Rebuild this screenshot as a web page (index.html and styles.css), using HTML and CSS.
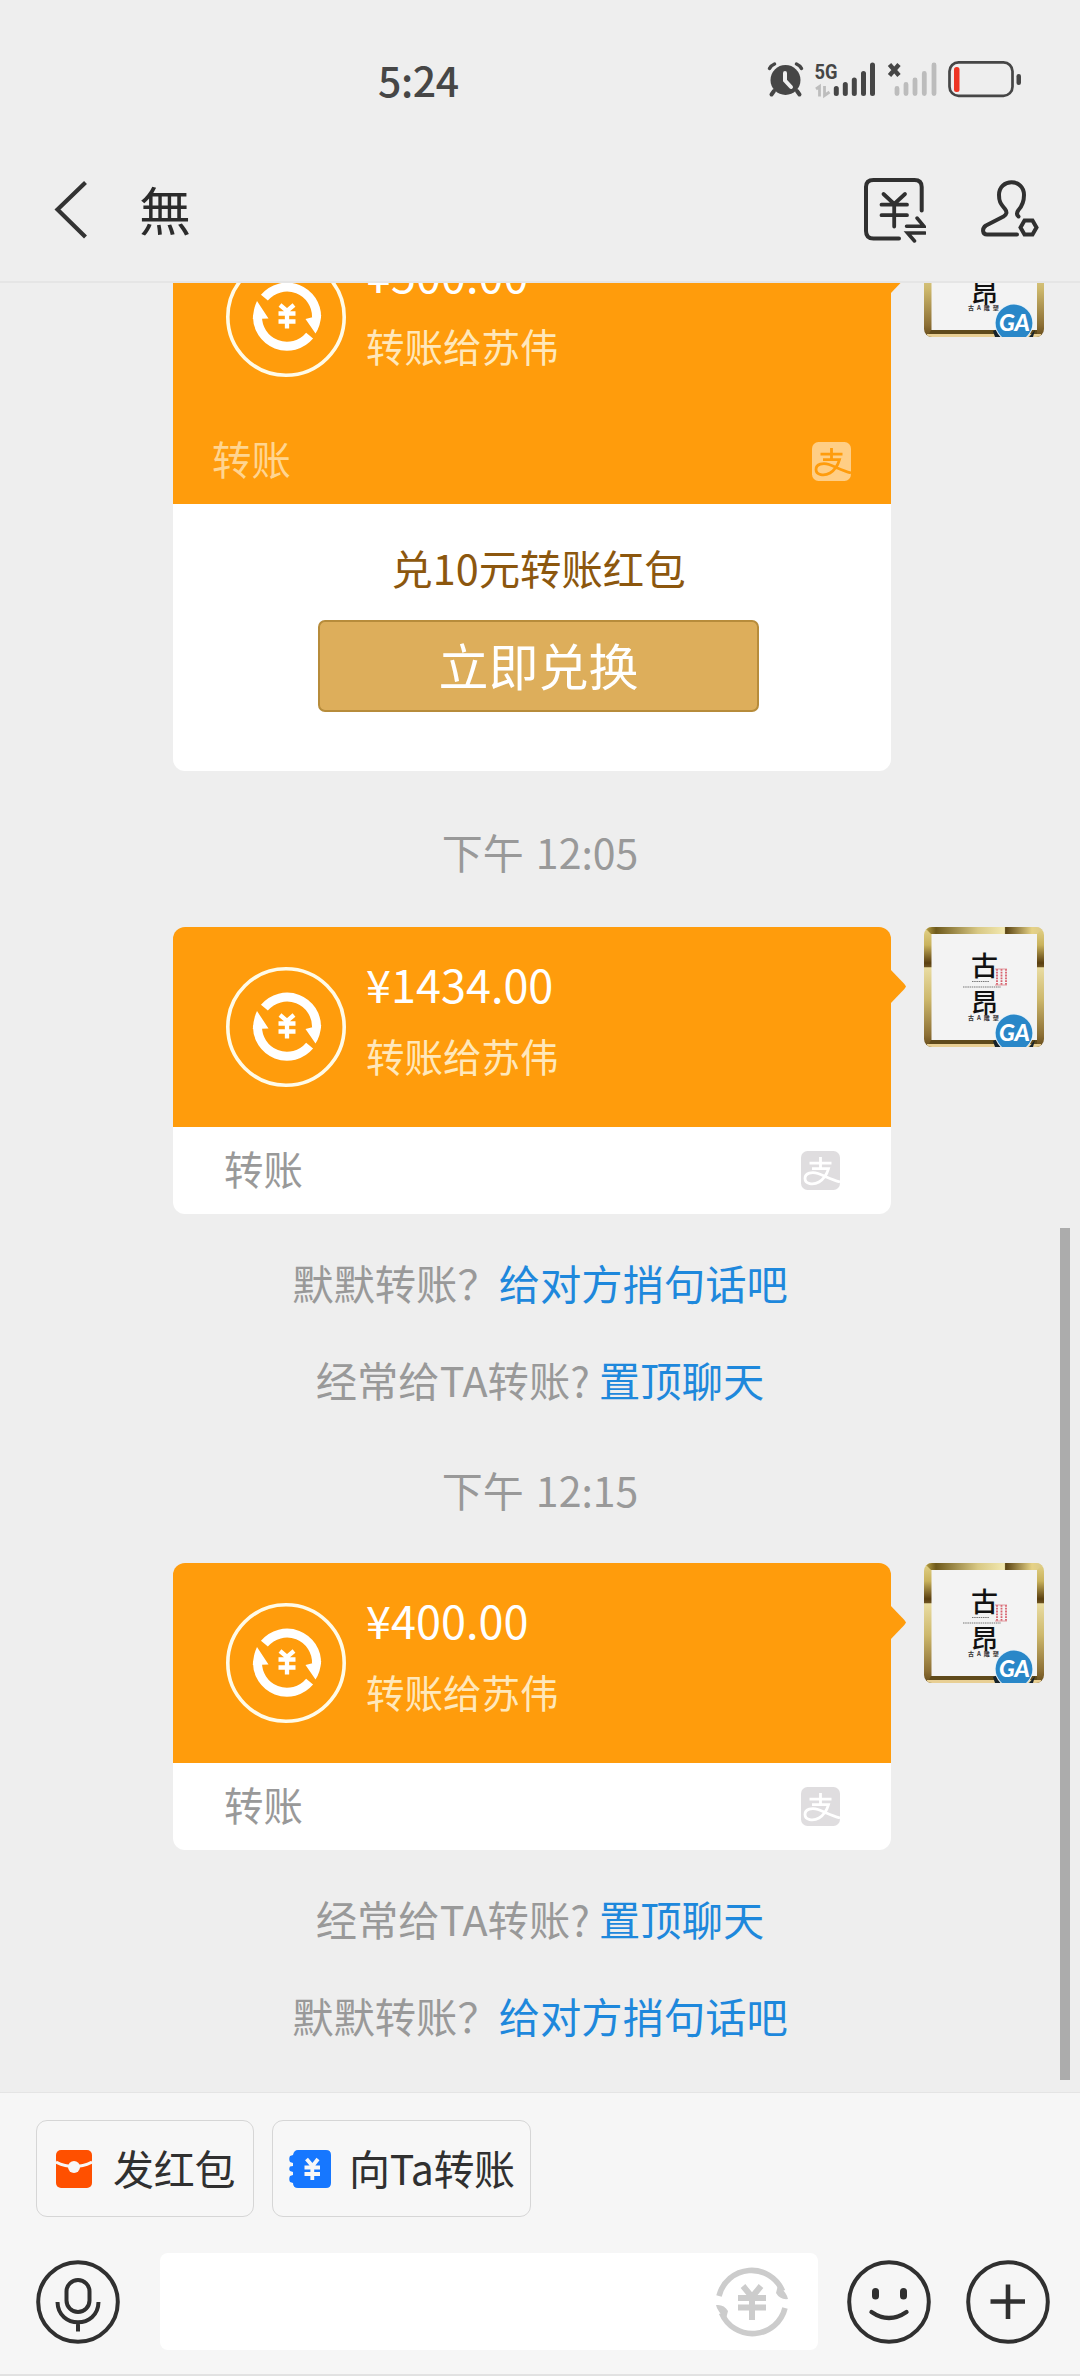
FILE: index.html
```html
<!DOCTYPE html>
<html lang="zh-CN">
<head>
<meta charset="utf-8">
<title>無</title>
<link rel="stylesheet" href="styles.css">
</head>
<body>
<svg class="defs" width="0" height="0" aria-hidden="true">
  <defs>
    <linearGradient id="goldTop" x1="0" x2="1" y1="0" y2="0">
      <stop offset="0" stop-color="#c3ab4c"/><stop offset=".1" stop-color="#6f5a1c"/><stop offset=".45" stop-color="#d8c884"/>
      <stop offset=".67" stop-color="#f2e8b0"/><stop offset=".68" stop-color="#5a4312"/><stop offset=".9" stop-color="#e6d286"/><stop offset="1" stop-color="#d9c88c"/>
    </linearGradient>
    <linearGradient id="goldSide" x1="0" x2="0" y1="0" y2="1">
      <stop offset="0" stop-color="#e4d389"/><stop offset=".15" stop-color="#c9b25c"/><stop offset=".3" stop-color="#5a3f10"/><stop offset=".33" stop-color="#6b5120"/>
      <stop offset=".34" stop-color="#e9dca2"/><stop offset=".6" stop-color="#cdb86c"/><stop offset=".9" stop-color="#8c6f35"/><stop offset="1" stop-color="#664c1c"/>
    </linearGradient>
    <clipPath id="avatarClip"><rect width="120" height="120" rx="8"/></clipPath>
    <symbol id="avatar" viewBox="0 0 120 120">
      <g clip-path="url(#avatarClip)">
        <rect width="120" height="120" fill="url(#goldSide)"/>
        <path d="M0 0H120L113 7H7Z" fill="url(#goldTop)"/>
        <path d="M3 117H117V120H3Z" fill="#e8cf94"/>
        <path d="M7 113H113V117H5Z" fill="#5f4a1b"/>
        <rect x="7.500" y="7" width="105.500" height="106" fill="#f3f3f3"/>
        <text class="av-name" x="60.500" y="49" text-anchor="middle">古</text>
        <text class="av-name" x="60.500" y="86" text-anchor="middle">昂</text>
        <path d="M48 54.500H65M39 60H77" stroke="#777" stroke-width="1.200" stroke-dasharray="1.500 .7"/>
        <path d="M73 42V58M77.500 42V58M82 42V58" stroke="#d8606c" stroke-width="1.800" stroke-dasharray="1.800 1"/>
        <path d="M71 42H83M71 58H83" stroke="#dc8088" stroke-width=".8"/>
        <text class="av-small" x="44" y="92.500">古 A 雕 塑</text>
        <path d="M69 114L74 112L77 120H71ZM111 113L105 120H109Z" fill="#16222a"/>
        <circle cx="90" cy="106" r="19.300" fill="#e6f1f8"/>
        <circle cx="90" cy="106" r="18.400" fill="#2987c8"/>
        <text class="av-ga" x="75" y="114" textLength="31" lengthAdjust="spacingAndGlyphs">GA</text>
      </g>
    </symbol>
    <symbol id="transfer" viewBox="0 0 120 120">
      <circle cx="60" cy="60" r="58.200" fill="none" stroke="#fffbe8" stroke-width="3.600"/>
      <g fill="none" stroke="#fff" stroke-width="9">
        <path d="M38.400 40.700A29.500 29.500 0 0 1 90.500 61"/>
        <path d="M83.600 78.700A29.500 29.500 0 0 1 31.500 58.500"/>
      </g>
      <path d="M79.500 62L95.200 58Q94.500 69 89.500 76.500Z M42.500 61.500L26.800 62Q27.500 51 31 44Z" fill="#fff"/>
      <path d="M54 48L61 54L68 48M61 54V71.500M52.500 56.500H69.500M52.500 64.500H69.500" fill="none" stroke="#fff" stroke-width="4.300"/>
    </symbol>
    <symbol id="alipay" viewBox="0 0 39 39">
      <rect class="ali-bg" width="39" height="39" rx="6.500"/>
      <path class="ali-fg" d="M8.500 12.200H30.500M19.500 6V17M11 17.700H27.500C26 23 23 28 18 31C12 34.500 4 33 4 27.500C4 22 11 20.500 17 22.500C24 25 30 28.500 39 31" />
    </symbol>
  </defs>
</svg>

<main class="screen">
  <header class="top">
    <div class="status">
      <span class="clock">5:24</span>
      <svg class="status-icons" viewBox="765 58 260 44" width="260" height="44">
        <g fill="#464646" stroke="#464646" stroke-linecap="round">
          <circle cx="785.500" cy="80" r="15" stroke="none"/>
          <path d="M774 91L771.500 94.500M797 91L799.500 94.500" stroke-width="4"/>
          <path d="M769.500 68.500Q771 65.500 774.500 64M801.500 68.500Q800 65.500 796.500 64" fill="none" stroke-width="3.500"/>
        </g>
        <path d="M785 73V80.500L791 87" fill="none" stroke="#eee" stroke-width="4" stroke-linecap="round"/>
        <text class="net" x="814.500" y="78.500" textLength="23" lengthAdjust="spacingAndGlyphs">5G</text>
        <path d="M816 89L819.500 86.500V96.500M829.500 92L824.500 95.500V86" fill="none" stroke="#bdbdbd" stroke-width="2.800"/>
        <g stroke="#464646" stroke-width="5" stroke-linecap="round">
          <path d="M836.300 88.500V93.500M845.300 84.500V93.500M854.300 80V93.500M863.500 73.500V93.500M872.500 65V93.500"/>
        </g>
        <path d="M897 88.500V93.500M906 84.500V93.500M915 80V93.500M924.300 73.500V93.500M934 65V93.500" stroke="#bcbcbc" stroke-width="4.800" stroke-linecap="round"/>
        <path d="M889.500 64.500L899 75.500M899 64.500L889.500 75.500" stroke="#464646" stroke-width="4.400"/>
        <rect x="949.500" y="62.300" width="63" height="33.500" rx="9" fill="none" stroke="#464646" stroke-width="2.700"/>
        <rect x="954" y="67" width="5.500" height="25" rx="2.500" fill="#ee3524"/>
        <rect x="1016.500" y="74" width="4.500" height="11" rx="2.200" fill="#464646"/>
      </svg>
    </div>
    <div class="nav">
      <svg class="back" viewBox="0 0 40 60" width="40" height="60"><path d="M35.500 2.500L7.500 29.500L35.500 57" fill="none" stroke="#333" stroke-width="4.200"/></svg>
      <h1 class="title">無</h1>
      <svg class="nav-icon" viewBox="862 176 64 68" width="64" height="68">
        <g fill="none" stroke="#303030" stroke-width="4" stroke-linecap="round" stroke-linejoin="round">
          <path d="M921.700 210.500V187Q921.700 180 914.500 180H873.500Q866 180 866 187V231Q866 238.500 873.500 238.500H899"/>
          <path d="M883.500 194L894.200 204L905 194M894.200 204V226.500M881.500 204.700H907M881.500 215.200H907" stroke-width="3.800"/>
          <path d="M906.500 226.300H924L917 218M925 233H907.500L914.500 241" stroke-width="3.500" stroke-linejoin="miter"/>
        </g>
      </svg>
      <svg class="nav-icon" viewBox="978 178 64 64" width="64" height="64">
        <g fill="none" stroke="#303030" stroke-width="4" stroke-linecap="round" stroke-linejoin="round">
          <path d="M1017 234.500H987C982.500 234.500 981.500 228.500 986 225.500L1003.500 216.500Q1008.500 213.500 1005 209C1000 203 999 201 999 195C999 178 1024 178 1024 195C1024 201 1023 205 1018.500 210Q1015.500 214 1018.500 216.500"/>
          <path d="M1024.500 220.500H1032.500L1036.500 227.500L1032.500 234.500H1024.500L1020.500 227.500Z" stroke-linejoin="miter"/>
        </g>
      </svg>
    </div>
  </header>

  <section class="chat">
    <article class="message">
      <div class="card">
        <div class="card-body card-tall">
          <div class="pay">
            <svg class="pay-icon"><use href="#transfer"/></svg>
            <div class="pay-text"><div class="amount">¥500.00</div><div class="to">转账给苏伟</div></div>
          </div>
          <div class="card-foot-in"><span>转账</span><svg class="ali ali-orange"><use href="#alipay"/></svg></div>
        </div>
        <div class="promo">
          <div class="promo-title">兑10元转账红包</div>
          <button class="promo-btn">立即兑换</button>
        </div>
      </div>
      <svg class="avatar"><use href="#avatar"/></svg>
    </article>

    <time class="stamp">下午 12:05</time>

    <article class="message">
      <div class="card">
        <div class="card-body">
          <div class="pay">
            <svg class="pay-icon"><use href="#transfer"/></svg>
            <div class="pay-text"><div class="amount">¥1434.00</div><div class="to">转账给苏伟</div></div>
          </div>
        </div>
        <div class="card-foot"><span>转账</span><svg class="ali ali-gray"><use href="#alipay"/></svg></div>
      </div>
      <svg class="avatar"><use href="#avatar"/></svg>
    </article>
    <div class="hints">
      <p class="hint">默默转账？<a>给对方捎句话吧</a></p>
      <p class="hint">经常给TA转账? <a>置顶聊天</a></p>
    </div>

    <time class="stamp stamp-late">下午 12:15</time>

    <article class="message">
      <div class="card">
        <div class="card-body">
          <div class="pay">
            <svg class="pay-icon"><use href="#transfer"/></svg>
            <div class="pay-text"><div class="amount">¥400.00</div><div class="to">转账给苏伟</div></div>
          </div>
        </div>
        <div class="card-foot"><span>转账</span><svg class="ali ali-gray"><use href="#alipay"/></svg></div>
      </div>
      <svg class="avatar"><use href="#avatar"/></svg>
    </article>
    <div class="hints">
      <p class="hint">经常给TA转账? <a>置顶聊天</a></p>
      <p class="hint">默默转账？<a>给对方捎句话吧</a></p>
    </div>
    <div class="scrollbar"></div>
  </section>

  <footer class="composer">
    <div class="quick">
      <button class="chip chip-red">
        <svg viewBox="0 0 36 38" width="36" height="38">
          <rect width="36" height="38" rx="5" fill="#ff5000"/>
          <path d="M0 12Q18 21 36 12" fill="none" stroke="#f7f7f7" stroke-width="3"/>
          <circle cx="18" cy="17" r="6" fill="#f7f7f7"/>
        </svg>
        <span>发红包</span>
      </button>
      <button class="chip chip-blue">
        <svg viewBox="0 0 42 38" width="42" height="38">
          <path d="M9 0H37Q42 0 42 5V33Q42 38 37 38H9Q4 38 4 33L1 32Q-.5 29 1 26L4 25V22L1 21Q-.5 19 1 16.500L4 16V13L1 12Q-.5 9 1 6L4 5Q5 0 9 0Z" fill="#1677ff"/>
          <path d="M17.500 9L23.500 16L29 9M23.300 16V30M15.500 17.500H31M15.500 24H31" fill="none" stroke="#f7f7f7" stroke-width="3.800"/>
        </svg>
        <span>向Ta转账</span>
      </button>
    </div>
    <div class="input-row">
      <svg class="round" viewBox="0 0 84 84">
        <g fill="none" stroke="#303030" stroke-width="4">
          <circle cx="42" cy="42" r="39.800"/>
          <rect x="30.500" y="20" width="23" height="32" rx="11.500"/>
          <path d="M21.500 42C22 69 62 69 62.500 42M42 62V71.500"/>
        </g>
      </svg>
      <div class="field">
        <svg viewBox="0 0 74 74" width="74" height="74">
          <g fill="none" stroke="#ccc" stroke-width="5.600">
            <path d="M4 31A33.500 33.500 0 0 1 67.500 26M70 43A33.500 33.500 0 0 1 6.500 48"/>
            <path d="M28 21L37 32L46 21M37 32V55M23 33H51M23 42.500H51" stroke-width="6"/>
          </g>
          <path d="M63 20Q72 28 73 34Q65 35 61 28ZM11 54Q2 46 1 40Q9 39 13 46Z" fill="#ccc"/>
        </svg>
      </div>
      <svg class="round round-face" viewBox="0 0 84 84">
        <circle cx="42" cy="42" r="39.800" fill="none" stroke="#303030" stroke-width="4"/>
        <rect x="25" y="28" width="7" height="11.500" rx="3.500" fill="#303030"/><rect x="53" y="28" width="7" height="11.500" rx="3.500" fill="#303030"/>
        <path d="M24.500 52Q42 64 59.500 52" fill="none" stroke="#303030" stroke-width="4.300" stroke-linecap="round"/>
      </svg>
      <svg class="round round-plus" viewBox="0 0 84 84">
        <circle cx="42" cy="42" r="39.800" fill="none" stroke="#303030" stroke-width="4"/>
        <path d="M42 24.500V59M24.500 41.500H59" stroke="#303030" stroke-width="4.600"/>
      </svg>
    </div>
  </footer>
</main>
</body>
</html>
```
FILE: styles.css
```css
* { box-sizing: border-box; }
body {
  margin: 0;
  background: #eee;
  color: #333;
  font-family: "Noto Sans CJK SC", sans-serif;
}
svg { display: block; flex: none; }
button { font: inherit; color: inherit; margin: 0; padding: 0; }
p, h1 { margin: 0; }
.defs { position: absolute; }

.screen { width: 1080px; height: 2376px; display: flex; flex-direction: column; overflow: hidden; }

/* status bar and title bar */
.top { height: 283px; flex: none; border-bottom: 2px solid #e5e5e5; }
.status { height: 160px; padding: 0 55px 0 378px; display: flex; align-items: center; justify-content: space-between; }
.clock { font-size: 41px; line-height: 60px; font-weight: 500; color: #464646; margin-top: -3px; letter-spacing: -.4px; }
.nav { height: 100px; display: flex; align-items: center; padding: 0 38px 0 50px; }
.title { flex: 1; margin-left: 49px; font-size: 52px; line-height: 80px; font-weight: 400; color: #2b2b2b; margin-top: -2px; }
.nav-icon + .nav-icon { margin-left: 52px; }

/* conversation */
.chat {
  position: relative;
  height: 1809px;
  flex: none;
  padding: 0 36px 45px 173px;
  overflow: hidden;
  display: flex;
  flex-direction: column;
  justify-content: flex-end;
}
.message { display: flex; flex: none; align-items: flex-start; gap: 33px; }
.card { position: relative; width: 718px; flex: none; }
.card::after {
  content: "";
  position: absolute;
  left: 717px;
  top: 42px;
  width: 16px;
  height: 35px;
  background: #ff9c0c;
  clip-path: polygon(0 0, 90% 43%, 100% 50%, 90% 57%, 0 100%);
}
.card-body { height: 200px; padding: 0 40px 0 53px; background: #ff9c0c; border-radius: 12px 12px 0 0; }
.card-tall { height: 287px; }
.pay { display: flex; padding-top: 40px; gap: 20px; }
.pay-icon { width: 120px; height: 120px; }
.amount { color: #fff; font-size: 45px; line-height: 50px; margin-top: -8px; }
.to { color: #ffe8bb; font-size: 38.500px; line-height: 50px; margin-top: 21px; }
.card-foot-in, .card-foot { display: flex; align-items: center; justify-content: space-between; font-size: 39.400px; line-height: 50px; }
.card-foot-in { margin: 59px 0 0 -14px; color: #ffd591; }
.card-foot { height: 87px; padding: 0 51px; background: #fff; border-radius: 0 0 12px 12px; color: #999; }
.card-foot-in span, .card-foot span { position: relative; top: -3px; }
.ali { width: 39px; height: 39px; }
.ali-gray { fill: #dfdddf; stroke: #fff; }
.ali-orange { fill: #ffce85; stroke: #ff9c0c; }
.ali-bg { stroke: none; }
.ali-fg { fill: none; stroke-width: 2.800px; }
.promo {
  height: 267px;
  padding-top: 31px;
  display: flex;
  flex-direction: column;
  align-items: center;
  background: #fff;
  border-radius: 0 0 12px 12px;
}
.promo-title { font-size: 41.400px; line-height: 60px; color: #8c570e; margin-top: 2px; margin-left: 13px; }
.promo-btn {
  width: 441px;
  height: 92px;
  margin: 23px 0 0 13px;
  border: 2px solid #b78c3b;
  border-radius: 7px;
  background: #ddae5b;
  color: #fff;
  font-size: 50px;
  line-height: 80px;
  padding-bottom: 4px;
}
.avatar { width: 120px; height: 120px; }
.av-name { font-size: 27px; font-weight: 500; fill: #111; }
.av-small { font-size: 6px; font-weight: 700; fill: #333; letter-spacing: .8px; }
.av-ga { font: italic 900 22px Lato, sans-serif; fill: #fff; }
.net { font: 700 21px Roboto, sans-serif; fill: #464646; }

.stamp { flex: none; margin: 50px 0 46px -137px; font-size: 41px; line-height: 60px; color: #999; text-align: center; word-spacing: 3px; }
.hints { flex: none; margin: 38px 0 2px -137px; display: flex; flex-direction: column; gap: 37px; }
.hint { font-size: 41.300px; line-height: 60px; color: #999; text-align: center; white-space: pre; }
.hint a { color: #1e88dc; }
.stamp-late { margin-top: 48px; margin-bottom: 44px; }
.scrollbar { position: absolute; right: 10px; top: 945px; width: 10px; height: 852px; background: #acacac; }

/* composer */
.composer { height: 284px; flex: none; background: #f6f6f6; border-top: 1px solid #e4e4e4; border-bottom: 2px solid #e2e2e2; padding: 27px 30px 0 36px; }
.quick { display: flex; gap: 18px; }
.chip { height: 97px; display: flex; align-items: center; background: #f7f7f7; border: 1px solid #d6d6d6; border-radius: 11px; font-size: 41px; line-height: 60px; color: #303030; }
.chip span { margin-top: -4px; white-space: nowrap; letter-spacing: -.3px; }
.chip-red { width: 218px; padding-left: 19px; gap: 21px; }
.chip-blue { width: 259px; padding-left: 16px; gap: 18px; }
.input-row { display: flex; align-items: center; margin-top: 36px; }
.round { width: 84px; height: 84px; }
.field { width: 658px; height: 97px; margin-left: 40px; padding-right: 29px; border-radius: 8px; background: #fff; display: flex; align-items: center; justify-content: flex-end; }
.round-face { margin-left: 29px; }
.round-plus { margin-left: 35px; }
```
